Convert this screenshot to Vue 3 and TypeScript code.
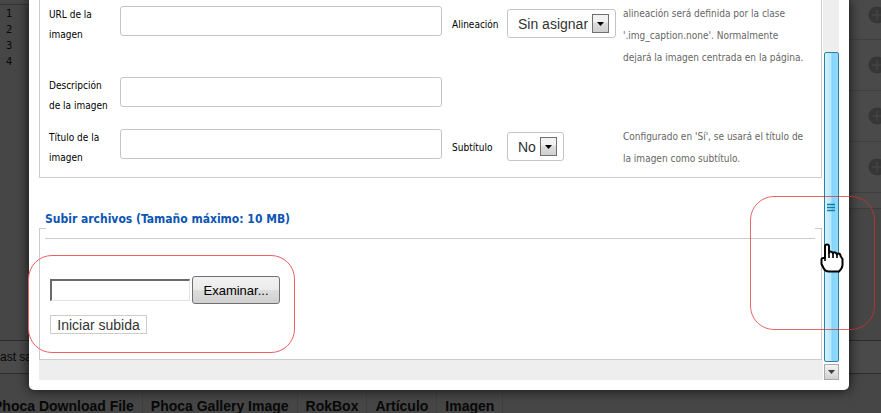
<script setup lang="ts">
import { ref } from 'vue'

interface ImageField {
  id: string
  label: string
  option?: { id: string; label: string; choices: string[] }
  help?: string
}

const fields: ImageField[] = [
  {
    id: 'image-url',
    label: 'URL de la imagen',
    option: { id: 'image-align', label: 'Alineación', choices: ['Sin asignar', 'Izquierda', 'Derecha'] },
    help: "alineación será definida por la clase '.img_caption.none'. Normalmente dejará la imagen centrada en la página.",
  },
  { id: 'image-description', label: 'Descripción de la imagen' },
  {
    id: 'image-title',
    label: 'Título de la imagen',
    option: { id: 'image-caption', label: 'Subtítulo', choices: ['No', 'Sí'] },
    help: "Configurado en 'Sí', se usará el título de la imagen como subtítulo.",
  },
]

const values = ref<Record<string, string>>({
  'image-url': '',
  'image-description': '',
  'image-title': '',
  'image-align': 'Sin asignar',
  'image-caption': 'No',
})
const fileName = ref('')
const lineNumbers = [1, 2, 3, 4]
const editorButtons = ['Phoca Download File', 'Phoca Gallery Image', 'RokBox', 'Artículo', 'Imagen']
</script>

<template>
  <div class="page">
    <div class="backdrop">
      <div class="editor">
        <ol class="lines">
          <li v-for="n in lineNumbers" :key="n">{{ n }}</li>
        </ol>
        <div class="side">
          <div v-for="n in 4" :key="n" class="side-row">
            <svg class="plus" viewBox="0 0 18 18" aria-hidden="true">
              <circle cx="9" cy="9" r="8.5" fill="#363636" />
              <path d="M9 4v10M4 9h10" stroke="#484848" />
            </svg>
          </div>
          <div class="side-end"></div>
        </div>
      </div>
      <div class="status">ast saved</div>
      <div class="buttons">
        <span v-for="name in editorButtons" :key="name">{{ name }}</span>
      </div>
    </div>

    <div class="modal" role="dialog" aria-label="Insertar imagen">
      <div class="pane">
        <div class="details">
          <div v-for="field in fields" :key="field.id" class="row">
            <label class="name" :for="field.id">{{ field.label }}</label>
            <input :id="field.id" v-model="values[field.id]" class="text" type="text" />
            <template v-if="field.option">
              <label class="option-name" :for="field.option.id">{{ field.option.label }}</label>
              <div class="option">
                <span class="picker">
                  <select :id="field.option.id" v-model="values[field.option.id]">
                    <option v-for="c in field.option.choices" :key="c">{{ c }}</option>
                  </select>
                  <svg class="drop" viewBox="0 0 17 19" aria-hidden="true">
                    <defs>
                      <linearGradient :id="field.option.id + '-fill'" x2="0" y2="1">
                        <stop offset="0.4" stop-color="#f2f2f2" />
                        <stop offset="0.5" stop-color="#dcdcdc" />
                        <stop offset="1" stop-color="#cfcfcf" />
                      </linearGradient>
                    </defs>
                    <rect x=".5" y=".5" width="16" height="18" :fill="`url(#${field.option.id}-fill)`" stroke="#707070" />
                    <path d="M5 8h7L8.500 12z" fill="#000" />
                  </svg>
                </span>
              </div>
              <p class="help">{{ field.help }}</p>
            </template>
          </div>
        </div>

        <h2 id="upload-title">Subir archivos (Tamaño máximo: 10 MB)</h2>
        <form class="upload" aria-labelledby="upload-title" @submit.prevent>
          <hr />
          <div class="file">
            <input v-model="fileName" type="text" aria-label="Archivo" />
            <button type="button" class="browse">Examinar...</button>
          </div>
          <button type="submit" class="start">Iniciar subida</button>
        </form>
        <div class="hbar"></div>
      </div>

      <div class="vbar">
        <div class="track"></div>
        <div class="thumb">
          <svg viewBox="0 0 8 9" aria-hidden="true">
            <path d="M0 1.500h8M0 4.500h8M0 7.500h8" stroke="#0f7fa3" stroke-width="1.6" />
          </svg>
        </div>
        <button type="button" class="down" aria-label="Bajar">
          <svg viewBox="0 0 7 4" aria-hidden="true"><path d="M0 0h7L3.500 4z" fill="#3c3c3c" /></svg>
        </button>
      </div>
    </div>

    <div class="mark mark-upload"></div>
    <div class="mark mark-scroll"></div>
    <svg class="hand" viewBox="0 0 24 30" aria-hidden="true">
      <path
        d="M5 3.500Q5 1.500 7 1.500T9 3.500V10Q9 8.500 10.500 8.500T13 10.500Q13 9.300 14.500 9.300T17 11.500Q17 10.500 18.500 10.500Q20.500 10.500 20.500 13L22.500 16V22Q22.500 25 19 28.500H9Q5 28.500 3.500 25L1.500 21V16.500Q1.500 14.500 5 15z"
        fill="#fff"
        stroke="#000"
        stroke-width="2"
        stroke-linejoin="round"
      />
      <path d="M5 14v4M9 9v6M13 10v5M17 11v4" fill="none" stroke="#000" stroke-width="1.6" />
    </svg>
  </div>
</template>

<style>
body {
  background: #464646;
}
</style>

<style scoped>
.page {
  display: grid;
  position: relative;
  min-height: 100vh;
  overflow: hidden;
  background: #464646;
  font-family: 'DejaVu Sans Condensed', 'DejaVu Sans', sans-serif;
  font-size: 10px;
}
.page * {
  box-sizing: border-box;
}
.backdrop,
.modal {
  grid-area: 1 / 1;
  min-width: 0;
}
.backdrop {
  display: flex;
  flex-direction: column;
  font-family: 'Liberation Sans', Arial, sans-serif;
  color: #080808;
}
.editor {
  display: flex;
  justify-content: space-between;
  height: 340px;
}
.lines {
  width: 30px;
  margin: 4px 0 0;
  padding: 1px 0 0 6px;
  border-top: 1px solid #353535;
  list-style: none;
  font: 11px/16px 'DejaVu Sans Condensed', sans-serif;
}
.side {
  align-self: flex-start;
  width: 32px;
  overflow: hidden;
  background: #4a4a4a;
}
.side-row {
  display: flex;
  align-items: center;
  height: 51px;
  padding-left: 19px;
  border-bottom: 1px solid #404040;
}
.side-row:first-child {
  height: 40px;
  padding-bottom: 10px;
}
.side-end {
  height: 16px;
  border-bottom: 1px solid #3c3c3c;
}
.plus {
  flex: none;
  width: 18px;
  height: 18px;
}
.status {
  height: 34px;
  border: solid #2c2c2c;
  border-width: 1px 0;
  background: #4a4a4a;
  font-size: 12px;
  line-height: 32px;
}
.buttons {
  display: flex;
  margin: 17px 0 0 -15px;
  font-size: 14px;
  line-height: 30px;
  font-weight: bold;
  white-space: nowrap;
}
.buttons span {
  height: 22px;
  padding: 0 8px;
  border-right: 1px solid #3f3f3f;
}
.modal {
  display: flex;
  align-self: start;
  margin: 0 32px 0 29px;
  padding: 0 10px 10px;
  border-radius: 0 0 5px 5px;
  background: #fff;
  box-shadow: 0 0 12px #000c;
}
.pane {
  flex: 1;
  min-width: 0;
}
.details {
  margin-right: 1px;
  padding: 2px 8px 0 9px;
  border: 1px solid #ccc;
  border-top: 0;
}
.row {
  display: grid;
  grid-template-columns: 71px minmax(100px, 322px) 65px 116px minmax(120px, 1fr);
  min-height: 52px;
}
.row:first-child {
  min-height: 71px;
}
.name {
  padding: 3px 6px 0 0;
  line-height: 20px;
}
.text {
  width: 100%;
  height: 30px;
  margin-top: 4px;
  border: 1px solid #c4c4c4;
  border-radius: 3px;
  background: #fff;
}
.option-name {
  padding: 13px 0 0 10px;
  line-height: 20px;
}
.option {
  padding-top: 7px;
}
.picker {
  display: inline-block;
  position: relative;
}
.picker select {
  display: block;
  appearance: none;
  field-sizing: content;
  height: 29px;
  padding: 0 27px 0 10px;
  border: 1px solid #c4c4c4;
  border-radius: 3px;
  background: #fff;
  color: #333;
  font: 14px 'Liberation Sans', Arial, sans-serif;
}
.drop {
  position: absolute;
  top: 5px;
  right: 7px;
  width: 17px;
  height: 19px;
  pointer-events: none;
}
.help {
  margin: 0;
  padding: 1px 6px 0 0;
  color: #666;
  line-height: 22px;
}
h2 {
  margin: 32px 0 0 6px;
  color: #0b55b4;
  font-size: 12px;
  line-height: 18px;
}
.upload {
  margin-right: 1px;
  padding: 10px 6px 25px 10px;
  border: 1px solid #ccc;
  border-top: 0;
  background:
    linear-gradient(#ccc, #ccc) left top / 6px 1px no-repeat,
    linear-gradient(#ccc, #ccc) right top / 6px 1px no-repeat;
}
.upload hr {
  height: 1px;
  margin: 0 0 37px -5px;
  border: 0;
  background: #ccc;
}
.file {
  display: flex;
  align-items: center;
  gap: 2px;
  margin-bottom: 11px;
}
.file input {
  width: 140px;
  height: 22px;
  border: 1px solid #e3e3e3;
  border-top: 2px solid #6a6a6a;
  border-left: 2px solid #6a6a6a;
}
.browse,
.start {
  padding: 0;
  font: 14px 'Liberation Sans', Arial, sans-serif;
}
.browse {
  width: 88px;
  height: 28px;
  border: 1px solid #707070;
  border-radius: 3px;
  background: linear-gradient(#f2f2f2, #ebebeb 50%, #dddddd 51%, #cfcfcf);
  color: #000;
  font-size: 13px;
}
.start {
  display: block;
  width: 97px;
  height: 19px;
  border: 1px solid #ccc;
  background: #fff;
  color: #333;
}
.hbar {
  height: 20px;
  background: #eee;
}
.vbar {
  display: flex;
  flex-direction: column;
  align-items: center;
  width: 16px;
}
.track {
  width: 100%;
  height: 52px;
  background: #eee;
}
.thumb {
  display: flex;
  flex: 1;
  align-items: center;
  justify-content: center;
  width: 15px;
  border: 1px solid #2c7d9e;
  border-radius: 2px;
  background: linear-gradient(90deg, #d4f3ff, #b5e8ff 45%, #86d4f9 55%, #90dcff);
}
.thumb svg {
  width: 8px;
  height: 9px;
}
.down {
  display: grid;
  place-items: center;
  width: 15px;
  height: 16px;
  margin-top: 2px;
  padding: 0;
  border: 1px solid #aaa;
  background: linear-gradient(#f4f4f4, #d0d0d0);
}
.down svg {
  width: 7px;
  height: 4px;
}
.mark {
  position: absolute;
  border: 1px solid #ef5f63;
  border-radius: 24px;
  pointer-events: none;
}
.mark-upload {
  top: 255px;
  left: 28px;
  width: 267px;
  height: 98px;
}
.mark-scroll {
  top: 196px;
  right: 6px;
  width: 125px;
  height: 134px;
  border-color: #dd2c30b8;
}
.hand {
  position: absolute;
  top: 243px;
  right: 37px;
  width: 24px;
  height: 30px;
  pointer-events: none;
}
</style>
